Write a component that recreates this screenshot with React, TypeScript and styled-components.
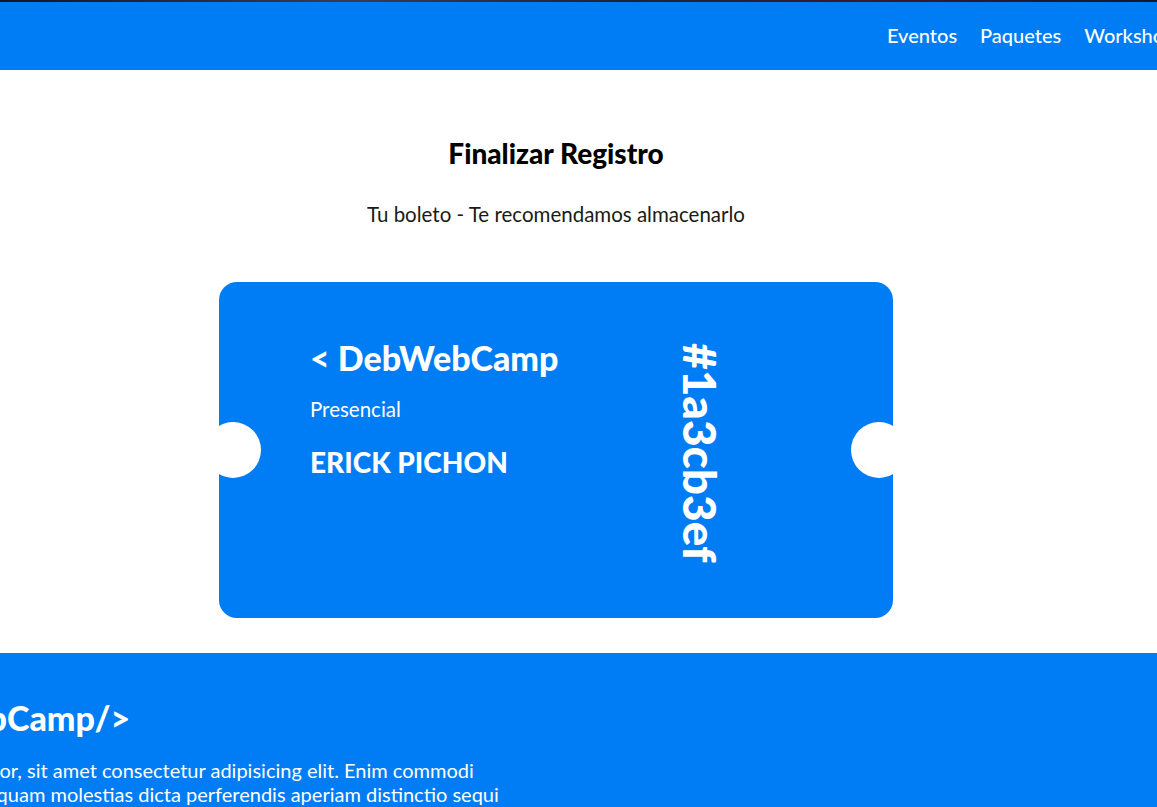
import React from 'react'
import styled, { createGlobalStyle } from 'styled-components'

const blue = '#007df4'

const GlobalStyle = createGlobalStyle`
  html, body {
    margin: 0;
    padding: 0;
    overflow: hidden;
  }
  body {
    font-family: Lato, 'Noto Sans', sans-serif;
    background: #fff;
  }
`

const Page = styled.div`
  width: 1157px;
  height: 807px;
  overflow: hidden;
`

const HeroStrip = styled.div`
  height: 2px;
  background: linear-gradient(90deg, #111622 0%, #3a3a55 30%, #1b2433 55%, #3b1a2b 75%, #0f1a2c 100%);
`

const Bar = styled.header`
  height: 68px;
  background: ${blue};
  display: flex;
  align-items: center;
  padding-left: 887px;
  overflow: hidden;
  white-space: nowrap;
`

const Nav = styled.nav`
  display: flex;
  gap: 23px;
  margin-top: -2px;
`

const NavLink = styled.a`
  color: #fff;
  font-size: 20px;
  font-weight: 500;
  text-decoration: none;
`

const Main = styled.main`
  display: flex;
  flex-direction: column;
  align-items: center;
  padding: 67px 45px 35px 0;
`

const Title = styled.h1`
  margin: 0;
  font-size: 28px;
  line-height: 32px;
  font-weight: 900;
  color: #000;
`

const Subtitle = styled.p`
  margin: 33px 0 0;
  font-size: 20.5px;
  line-height: 24px;
  color: #1a1b15;
`

const Ticket = styled.div`
  position: relative;
  margin-top: 56px;
  width: 674px;
  height: 336px;
  box-sizing: border-box;
  background: ${blue};
  border-radius: 18px;
  padding: 55px 0 0 91px;
  display: grid;
  grid-template-columns: 368px 1fr;
  align-items: start;
  color: #fff;
`

const Notch = styled.span<{ $side: 'left' | 'right' }>`
  position: absolute;
  top: 50%;
  ${(p) => (p.$side === 'left' ? 'left: -14px;' : 'right: -14px;')}
  width: 56px;
  height: 56px;
  margin-top: -28px;
  border-radius: 50%;
  background: #fff;
`

const Info = styled.div`
  display: flex;
  flex-direction: column;
`

const Brand = styled.h2`
  margin: 0;
  font-size: 34px;
  line-height: 41px;
  font-weight: 900;
`

const Plan = styled.p`
  margin: 20px 0 0;
  font-size: 20.5px;
  line-height: 23px;
`

const Holder = styled.p`
  margin: 25px 0 0;
  font-size: 28px;
  line-height: 32px;
  font-weight: 900;
  text-transform: uppercase;
`

const Code = styled.p`
  justify-self: start;
  margin: 6px 0 0 2px;
  writing-mode: vertical-rl;
  font-size: 46px;
  line-height: 40px;
  font-weight: 900;
`

const Footer = styled.footer`
  background: ${blue};
  color: #fff;
  padding-top: 44px;
  height: 200px;
  overflow: hidden;
`

const FooterInner = styled.div`
  margin-left: -145px;
  width: 655px;
`

const FooterLogo = styled.h3`
  margin: 0;
  font-size: 34px;
  line-height: 41px;
  font-weight: 900;
`

const FooterText = styled.p`
  margin: 20px 0 0;
  font-size: 20px;
  line-height: 24px;
`

export default function App() {
  return (
    <Page>
      <GlobalStyle />
      <HeroStrip />
      <Bar>
        <Nav>
          <NavLink href="#">Eventos</NavLink>
          <NavLink href="#">Paquetes</NavLink>
          <NavLink href="#">Workshops / Conferencias</NavLink>
          <NavLink href="#">Comprar Pase</NavLink>
        </Nav>
      </Bar>
      <Main>
        <Title>Finalizar Registro</Title>
        <Subtitle>Tu boleto - Te recomendamos almacenarlo</Subtitle>
        <Ticket>
          <Notch $side="left" />
          <Notch $side="right" />
          <Info>
            <Brand>&lt; DebWebCamp</Brand>
            <Plan>Presencial</Plan>
            <Holder>Erick Pichon</Holder>
          </Info>
          <Code>#1a3cb3ef</Code>
        </Ticket>
      </Main>
      <Footer>
        <FooterInner>
          <FooterLogo>&lt;DevWebCamp/&gt;</FooterLogo>
          <FooterText>
            Lorem ipsum dolor, sit amet consectetur adipisicing elit. Enim commodi nihil eaque, sint
            quam molestias dicta perferendis aperiam distinctio sequi
          </FooterText>
        </FooterInner>
      </Footer>
    </Page>
  )
}
